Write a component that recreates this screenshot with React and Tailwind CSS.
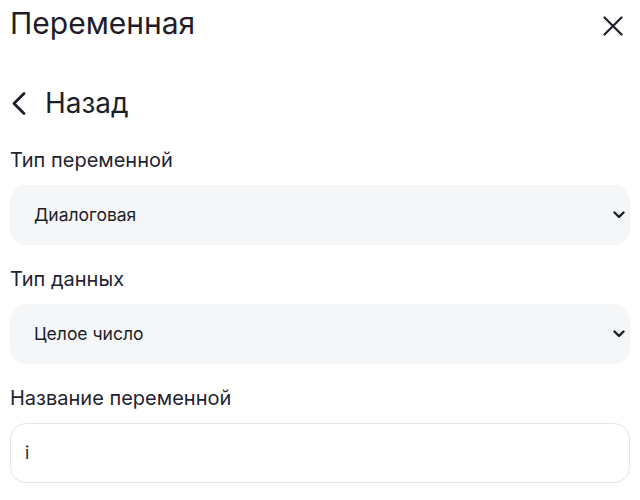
import React from 'react';

function SelectArrow() {
  return (
    <svg width="12" height="8" viewBox="0 0 12 8" fill="none" className="text-[#1b1f2a]">
      <polyline points="1.5,1.5 6,6 10.5,1.5" stroke="currentColor" strokeWidth="2.4" strokeLinecap="round" strokeLinejoin="round" />
    </svg>
  );
}

function SelectField({ label, value }) {
  return (
    <div className="mb-[22px]">
      <p className="text-[20px] leading-[24px] text-[#1f2430] mb-[13px]">{label}</p>
      <div className="h-[60px] rounded-[16px] bg-[#f5f6f8] flex items-center justify-between pl-[24px] pr-[5px]">
        <span className="text-[17.5px] text-[#1b1f2a]">{value}</span>
        <SelectArrow />
      </div>
    </div>
  );
}

export default function App() {
  return (
    <div className="w-[640px] h-[500px] bg-white px-[10px] font-['Inter',sans-serif] overflow-hidden">
      {/* Header */}
      <div className="flex items-start justify-between pt-[5px]">
        <h1 className="text-[30px] leading-[36px] text-[#221c28]">Переменная</h1>
        <svg width="20" height="20" viewBox="0 0 20 20" className="text-[#1b1f2a] mr-[7px] mt-[11px]">
          <path d="M1.5 1.5 18.5 18.5M18.5 1.5 1.5 18.5" stroke="currentColor" strokeWidth="2.2" strokeLinecap="round" />
        </svg>
      </div>

      <div className="flex items-center gap-[17px] mt-[45px] mb-[28px]">
        <svg width="18" height="24" viewBox="0 0 18 24" fill="none" className="text-[#1b1f2a]">
          <polyline points="14,2.5 4,12.5 14,22.5" stroke="currentColor" strokeWidth="2.8" strokeLinecap="round" strokeLinejoin="round" />
        </svg>
        <span className="text-[28px] leading-[34px] text-[#1b1f2a]">Назад</span>
      </div>

      <SelectField label="Тип переменной" value="Диалоговая" />
      <SelectField label="Тип данных" value="Целое число" />

      <div>
        <p className="text-[20px] leading-[24px] text-[#1f2430] mb-[13px]">Название переменной</p>
        <div className="h-[60px] rounded-[16px] border border-[#e4e4ef] flex items-center pl-[14px]">
          <span className="text-[17.5px] text-[#1b1f2a]">i</span>
        </div>
      </div>
    </div>
  );
}
